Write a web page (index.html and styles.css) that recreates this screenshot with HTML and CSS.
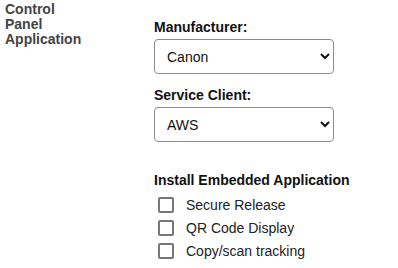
FILE: index.html
```
<!DOCTYPE html>
<html lang="en">
  <head>
    <meta charset="UTF-8" />
    <meta name="viewport" content="width=device-width, initial-scale=1.0" />
    <title>Control Panel Application</title>
    <link rel="stylesheet" href="styles.css">
  </head>
  <body>
    <main class="row">
      <div class="side-label">Control Panel Application</div>
      <div class="fields">
        <label class="field-label" for="manufacturer">Manufacturer:</label>
        <select class="pick" id="manufacturer">
          <option>Canon</option>
          <option>HP</option>
          <option>Ricoh</option>
        </select>

        <label class="field-label second" for="client">Service Client:</label>
        <select class="pick" id="client">
          <option>AWS</option>
          <option>Azure</option>
        </select>

        <div class="group-title">Install Embedded Application</div>
        <ul class="checks">
          <li><label><input type="checkbox" class="box"> Secure Release</label></li>
          <li><label><input type="checkbox" class="box"> QR Code Display</label></li>
          <li><label><input type="checkbox" class="box"> Copy/scan tracking</label></li>
        </ul>
      </div>
    </main>
  </body>
</html>
```

FILE: styles.css
```
* {
  margin: 0;
  padding: 0;
  box-sizing: border-box;
  font-family: "Liberation Sans", Arial, Helvetica, sans-serif;
}

body {
  background-color: #fff;
  color: #111;
  font-size: 14px;
}

.row {
  display: flex;
  padding-left: 5px;
  gap: 69px;
}

.side-label {
  width: 80px;
  padding-top: 2px;
  font-weight: bold;
  line-height: 15px;
  color: #444;
}

.fields {
  display: flex;
  flex-direction: column;
  align-items: flex-start;
  padding-top: 19px;
}

.field-label {
  display: block;
  font-weight: bold;
  line-height: 17px;
  margin-bottom: 3px;
}
.field-label.second {
  margin-top: 13px;
}

.pick {
  width: 180px;
  height: 35px;
  padding: 0 8px;
  font-size: 14px;
  color: #111;
  background-color: #fff;
  border: 1px solid #8c8c8c;
  border-radius: 4px;
}

.group-title {
  margin-top: 30px;
  font-weight: bold;
  line-height: 17px;
}

.checks {
  list-style: none;
  margin-top: 4px;
  padding-left: 4px;
}
.checks li {
  height: 23px;
  display: flex;
  align-items: center;
}
.checks label {
  display: flex;
  align-items: center;
  gap: 12px;
  color: #222;
}

.box {
  appearance: none;
  width: 16px;
  height: 16px;
  border: 2px solid #767676;
  border-radius: 2px;
  background-color: #fff;
}
```
